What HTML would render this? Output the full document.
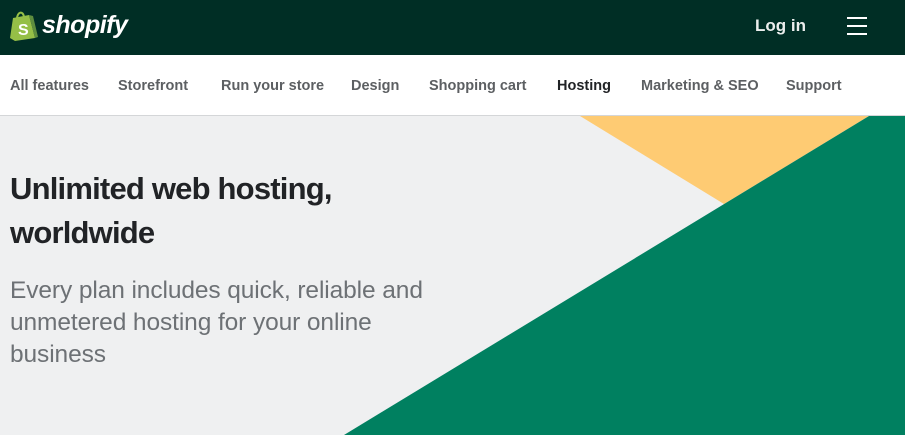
<!DOCTYPE html>
<html><head><meta charset="utf-8"><style>
*{margin:0;padding:0;box-sizing:border-box}
body{width:905px;height:435px;overflow:hidden;font-family:"Liberation Sans",sans-serif;background:#eff0f1;position:relative}
.hdr{position:absolute;left:0;top:0;width:905px;height:55px;background:#002e25}
.logo{position:absolute;left:42px;top:11px;color:#fff;font-weight:bold;font-style:italic;font-size:25px;letter-spacing:-0.5px}
.login{position:absolute;left:755px;top:16px;color:#fff;font-size:17px;font-weight:bold;opacity:.92}
.burger{position:absolute;left:847px;top:17px;width:20px}
.burger i{display:block;height:2px;background:#fff;margin-bottom:6px}
.nav{position:absolute;left:0;top:55px;width:905px;height:61px;background:#fff;border-bottom:1px solid #d4d6d8}
.nav span{position:absolute;top:23px;font-size:14.5px;font-weight:bold;color:#5c5f62}
.hero{position:absolute;left:0;top:116px}
h1{position:absolute;left:10px;top:167px;font-size:31px;line-height:44px;color:#212326;letter-spacing:-0.8px;font-weight:bold}
p{position:absolute;left:10px;top:275px;font-size:24.5px;line-height:32px;color:#6d7175;letter-spacing:-0.1px;width:430px}
</style></head><body>
<div class="hdr">
<svg style="position:absolute;left:10px;top:10px" width="28" height="31" viewBox="0 0 28 31"><path d="M3 8 L19 5 L25 28 L5 31 L0 28 Z" fill="#95bf47"/><path d="M19 5 L25 28 L28 27 L23 6 Z" fill="#5e8e3e"/><path d="M7 9 C7 2 13 0 14 7" stroke="#95bf47" stroke-width="2" fill="none"/><text x="8" y="25" font-family="Liberation Sans" font-weight="bold" font-size="16" fill="#fff">S</text></svg>
<div class="logo">shopify</div>
<div class="login">Log in</div>
<div class="burger"><i></i><i></i><i></i></div>
</div>
<div class="nav">
<span style="left:10px">All features</span>
<span style="left:118px">Storefront</span>
<span style="left:221px">Run your store</span>
<span style="left:351px">Design</span>
<span style="left:429px">Shopping cart</span>
<span style="left:557px;color:#212326">Hosting</span>
<span style="left:641px">Marketing &amp; SEO</span>
<span style="left:786px">Support</span>
</div>
<svg class="hero" width="905" height="319"><polygon points="580,0 869,0 724,88" fill="#fecb73"/><polygon points="869,0 905,0 905,319 344,319" fill="#008060"/></svg>
<h1>Unlimited web hosting,<br>worldwide</h1>
<p>Every plan includes quick, reliable and unmetered hosting for your online business</p>
</body></html>
